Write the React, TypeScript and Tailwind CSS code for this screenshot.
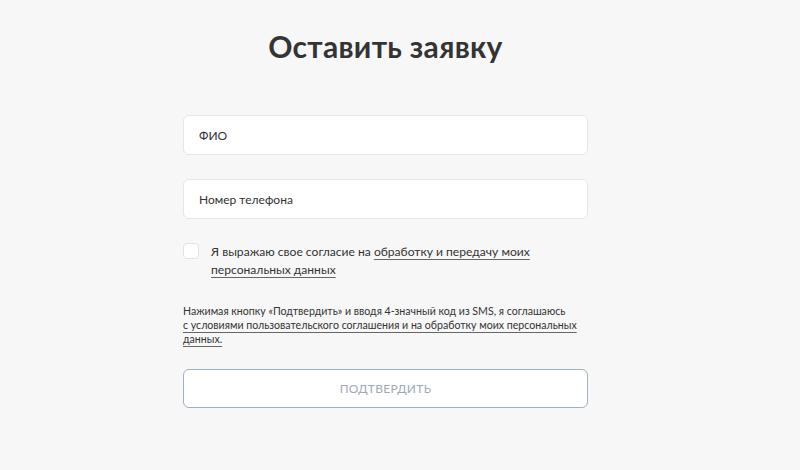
import { useState } from "react";

export default function App() {
  const [agree, setAgree] = useState(false);

  return (
    <div
      className="min-h-screen w-full bg-[#f7f7f7] text-[#333]"
      style={{ fontFamily: '"Lato", "Noto Sans", sans-serif' }}
    >
      <div className="w-[771px]">
        <div className="mx-auto w-[405px] pt-[26px]">
          {/* Title */}
          <h1 className="text-center text-[30px] font-bold leading-[40px] text-[#343434] tracking-[0.3px]">
            Оставить заявку
          </h1>

          {/* Inputs */}
          <div className="mt-[49px] flex flex-col gap-[24px]">
            <input
              placeholder="ФИО"
              className="h-[40px] w-full rounded-[6px] border border-[#e6e6e6] bg-white px-[15px] text-[12px] text-[#333] placeholder:text-[#333] outline-none"
            />
            <input
              placeholder="Номер телефона"
              className="h-[40px] w-full rounded-[6px] border border-[#e6e6e6] bg-white px-[15px] text-[12px] text-[#333] placeholder:text-[#333] outline-none"
            />
          </div>

          {/* Consent */}
          <label className="mt-[24px] flex items-start gap-[12px] cursor-pointer">
            <span
              onClick={() => setAgree(!agree)}
              className="h-[16px] w-[16px] shrink-0 rounded-[4px] border border-[#e3e3e3] bg-white"
            />
            <span className="text-[12.1px] leading-[18px] text-[#333]">
              Я выражаю свое согласие на{" "}
              <a className="underline underline-offset-[3px] decoration-[#666]">
                обработку и передачу моих персональных данных
              </a>
            </span>
          </label>

          {/* Terms */}
          <p className="mt-[25px] text-[10.6px] leading-[14px] text-[#333]">
            Нажимая кнопку «Подтвердить» и вводя 4-значный код из SMS, я соглашаюсь
            <br />
            <a className="underline underline-offset-[3px] decoration-[#666]">
              с условиями пользовательского соглашения и на обработку моих персональных
              данных.
            </a>
          </p>

          {/* Submit */}
          <button
            disabled={!agree}
            className="mt-[23px] h-[39px] w-full rounded-[6px] border border-[#9fb0c4] bg-white text-[12px] uppercase tracking-[0.3px] text-[#a0aab6]"
          >
            Подтвердить
          </button>
        </div>
      </div>
    </div>
  );
}
